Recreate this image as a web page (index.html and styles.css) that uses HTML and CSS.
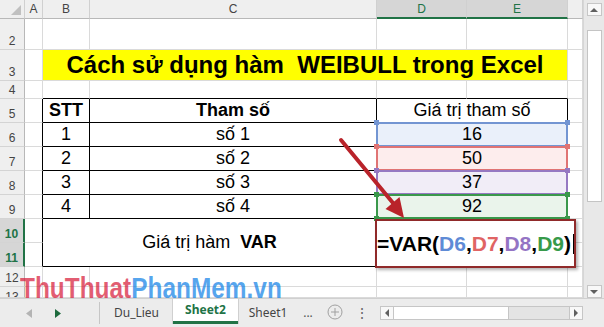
FILE: index.html
```html
<!DOCTYPE html>
<html>
<head>
<meta charset="utf-8">
<link rel="stylesheet" href="styles.css">
</head>
<body>
<div class="app">
  <div class="main">
    <div class="sheet">
      <div class="h corner"><span class="tri"></span></div>
      <div class="h">A</div><div class="h">B</div><div class="h">C</div><div class="h sel">D</div><div class="h sel">E</div><div class="h"></div>

      <div class="r">2</div><div class="c"></div><div class="c"></div><div class="c"></div><div class="c"></div><div class="c"></div><div class="c"></div>

      <div class="r">3</div><div class="c"></div><div class="c title">Cách sử dụng hàm  WEIBULL trong Excel</div><div class="c"></div>

      <div class="r">4</div><div class="c"></div><div class="c tt"></div><div class="c tt"></div><div class="c tt"></div><div class="c tt"></div><div class="c"></div>

      <div class="r">5</div><div class="c tl"></div><div class="c tb b">STT</div><div class="c tb b">Tham số</div><div class="c tb span2">Giá trị tham số</div><div class="c"></div>

      <div class="r">6</div><div class="c tl"></div><div class="c tb">1</div><div class="c tb">số 1</div><div class="c tb span2 rg rg-blue">16</div><div class="c"></div>
      <div class="r">7</div><div class="c tl"></div><div class="c tb">2</div><div class="c tb">số 2</div><div class="c tb span2 rg rg-red">50</div><div class="c"></div>
      <div class="r">8</div><div class="c tl"></div><div class="c tb">3</div><div class="c tb">số 3</div><div class="c tb span2 rg rg-purple">37</div><div class="c"></div>
      <div class="r">9</div><div class="c tl"></div><div class="c tb">4</div><div class="c tb">số 4</div><div class="c tb span2 rg rg-green">92</div><div class="c"></div>

      <div class="r sel">10</div><div class="c tl"></div><div class="c tb merge"><span>Giá trị hàm  <b>VAR</b></span></div><div class="c tb fx"><div class="editor"><span>=VAR(</span><span class="fx-b">D6</span><span>,</span><span class="fx-r">D7</span><span>,</span><span class="fx-p">D8</span><span>,</span><span class="fx-g">D9</span><span>)</span><span class="caret"></span></div></div><div class="c"></div>
      <div class="r sel">11</div><div class="c tl"></div><div class="c"></div>

      <div class="r">12</div><div class="c"></div><div class="c"></div><div class="c"></div><div class="c"></div><div class="c"></div><div class="c"></div>
      <div class="r clip">13</div><div class="c"></div><div class="c"></div><div class="c"></div><div class="c"></div><div class="c"></div><div class="c"></div>

      <svg class="arrow" width="583" height="298" viewBox="0 0 583 298">
        <line x1="341" y1="140" x2="393" y2="203" stroke="#b9232a" stroke-width="4" stroke-linecap="round"/>
        <polygon points="404,218 385.5,209 399.5,197" fill="#b9232a"/>
      </svg>
    </div>
    <div class="vscroll">
      <div class="vbtn"><span class="tri-up"></span></div>
      <div class="vthumb"></div>
      <div class="vspace"></div>
      <div class="vbtn"><span class="tri-down"></span></div>
    </div>
  </div>
  <div class="tabbar">
    <div class="nav">
      <svg width="6" height="9" viewBox="0 0 6 9"><polygon points="6,0 6,9 0,4.5" fill="#b4b4b4"/></svg>
      <svg width="6" height="9" viewBox="0 0 6 9"><polygon points="0,0 0,9 6,4.5" fill="#1e6b3e"/></svg>
    </div>
    <div class="tab du">Du_Lieu</div>
    <div class="tab s2">Sheet2</div>
    <div class="tab s1">Sheet1</div>
    <div class="tab more">...</div>
    <div class="tab add">
      <svg width="16" height="16" viewBox="0 0 16 16"><circle cx="8" cy="8" r="7" fill="none" stroke="#a0a0a0" stroke-width="1"/><line x1="8" y1="4" x2="8" y2="12" stroke="#a0a0a0"/><line x1="4" y1="8" x2="12" y2="8" stroke="#a0a0a0"/></svg>
    </div>
    <div class="tab kebab">⋮</div>
    <div class="hs">
      <div class="hbtn"><span class="tri-left"></span></div>
      <div class="hthumb"></div>
      <div class="hspace"></div>
      <div class="hbtn right"><span class="tri-right"></span></div>
    </div>
  </div>
  <div class="wm"><span class="wm-r">ThuThuat</span><span class="wm-b">PhanMem.vn</span></div>
</div>
</body>
</html>
```

FILE: styles.css
```css
* { box-sizing: border-box; margin: 0; padding: 0; }
html, body { width: 604px; height: 327px; overflow: hidden; background: #fff; }
body { font-family: "Liberation Sans", Arial, sans-serif; }

.app { width: 604px; height: 327px; display: flex; flex-direction: column; position: relative; }
.main { display: flex; height: 298px; }

.sheet {
  width: 583px;
  height: 298px;
  display: grid;
  grid-template-columns: 25px 18px 47px 287px 90px 101px 15px;
  grid-template-rows: 19px 31px 31px 18px repeat(7, 24px) 20px 11px;
  position: relative;
  overflow: hidden;
}

/* column headers */
.h {
  background: #efefef;
  border-right: 1px solid #d0d0d0;
  border-bottom: 1px solid #b8b8b8;
  font-size: 12px;
  color: #444;
  display: flex;
  align-items: center;
  justify-content: center;
}
.h.sel { background: #d6d6d6; color: #217346; border-bottom: 2px solid #217346; }
.corner { position: relative; }
.tri {
  position: absolute;
  right: 3px;
  bottom: 3px;
  width: 10px;
  height: 10px;
  background: #c0c0c0;
  clip-path: polygon(100% 0, 100% 100%, 0 100%);
}

/* row headers */
.r {
  background: #efefef;
  border-right: 1px solid #b8b8b8;
  border-bottom: 1px solid #d4d4d4;
  font-size: 12px;
  line-height: 14px;
  color: #444;
  display: flex;
  align-items: flex-end;
  justify-content: center;
  padding-bottom: 1px;
  overflow: hidden;
}
.r.sel { background: #d6d6d6; color: #217346; font-weight: bold; border-right: 2px solid #217346; }
.r.clip { align-items: flex-start; padding-top: 3px; padding-bottom: 0; }

/* cells */
.c {
  border-right: 1px solid #dadada;
  border-bottom: 1px solid #dadada;
  display: flex;
  align-items: center;
  justify-content: center;
  font-size: 18px;
  color: #000;
  white-space: pre;
}
.tt { border-bottom-color: #000; }
.tl { border-right-color: #000; }
.tb { border-right-color: #000; border-bottom-color: #000; }
.b { font-weight: bold; }
.span2 { grid-column: span 2; }

.title {
  grid-column: span 4;
  background: #ffff00;
  font-weight: bold;
  font-size: 24px;
}

.merge { grid-column: span 2; grid-row: span 2; }

/* reference range highlights */
.rg { position: relative; }
.rg::before {
  content: "";
  position: absolute;
  left: -1px; top: -1px; right: -1px; bottom: -1px;
  border: 2px solid var(--c);
}
.rg::after {
  content: "";
  position: absolute;
  left: -3px; top: -3px;
  width: 5px; height: 5px;
  background: var(--c);
  box-shadow: 191px 0 var(--c), 0 24px var(--c), 191px 24px var(--c);
}
.rg-blue { --c: #7395d2; background: #eaf0fa; }
.rg-red { --c: #e07474; background: #fdeded; }
.rg-purple { --c: #9679c2; background: #f1edf7; }
.rg-green { --c: #3a984b; background: #eaf4eb; }

/* formula editor */
.fx { grid-column: span 2; grid-row: span 2; position: relative; }
.editor {
  position: absolute;
  left: -2px;
  top: 0;
  width: 201px;
  height: 49px;
  border: 2px solid #902a2a;
  background: #fff;
  box-shadow: 2px 2px 3px rgba(0, 0, 0, 0.3);
  display: flex;
  align-items: center;
  font-weight: bold;
  font-size: 21px;
  z-index: 2;
}
.fx-b { color: #5f8bd6; }
.fx-r { color: #e06464; }
.fx-p { color: #9474c4; }
.fx-g { color: #379a4a; }
.caret { display: inline-block; width: 1px; height: 20px; background: #000; margin-left: 2px; }

.arrow { position: absolute; left: 0; top: 0; z-index: 3; pointer-events: none; }

/* vertical scrollbar */
.vscroll {
  width: 21px;
  height: 298px;
  background: #e8e8e8;
  border-left: 1px solid #d6d6d6;
  display: flex;
  flex-direction: column;
  align-items: center;
  padding-top: 3px;
}
.vbtn {
  width: 15px;
  height: 13px;
  background: #f8f8f8;
  border: 1px solid #c6c6c6;
  display: flex;
  align-items: center;
  justify-content: center;
}
.vthumb { width: 15px; height: 172px; margin-top: 14px; background: #fff; border: 1px solid #c4c4c4; }
.vspace { flex: 1; }
.tri-up { width: 0; height: 0; border-left: 4px solid transparent; border-right: 4px solid transparent; border-bottom: 4px solid #606060; }
.tri-down { width: 0; height: 0; border-left: 4px solid transparent; border-right: 4px solid transparent; border-top: 4px solid #606060; }
.tri-left { width: 0; height: 0; border-top: 4px solid transparent; border-bottom: 4px solid transparent; border-right: 4px solid #606060; }
.tri-right { width: 0; height: 0; border-top: 4px solid transparent; border-bottom: 4px solid transparent; border-left: 4px solid #606060; }

/* tab bar */
.tabbar {
  height: 29px;
  display: flex;
  align-items: stretch;
  background: #ececec;
  border-top: 1px solid #d0d0d0;
  font-family: "Noto Sans", "Open Sans", sans-serif;
  font-size: 12px;
  color: #444;
}
.nav {
  width: 100px;
  display: flex;
  align-items: center;
  padding-left: 26px;
  gap: 23px;
  margin: 3px 0 3px;
  border-right: 1px solid #c6c6c6;
}
.tab { display: flex; align-items: center; justify-content: center; padding-bottom: 2px; }
.du { width: 73px; }
.s2 {
  width: 65px;
  background: #fff;
  color: #217346;
  font-weight: bold;
  border-bottom: 3px solid #217346;
  margin-bottom: 3px;
  box-shadow: 1px 0 0 #d0d0d0, -1px 0 0 #d0d0d0;
}
.s1 { width: 60px; }
.more { width: 20px; color: #555; }
.add { width: 34px; }
.kebab { width: 20px; margin-right: 8px; color: #666; font-size: 14px; }
.hs {
  width: 203px;
  height: 14px;
  align-self: center;
  display: flex;
  border: 1px solid #c6c6c6;
  background: #e4e4e4;
}
.hbtn { width: 13px; background: #f8f8f8; border-right: 1px solid #c6c6c6; display: flex; align-items: center; justify-content: center; }
.hbtn.right { border-right: none; border-left: 1px solid #c6c6c6; }
.hthumb { width: 115px; background: #fff; border-right: 1px solid #c6c6c6; }
.hspace { flex: 1; }

/* watermark */
.wm {
  position: absolute;
  left: 20px;
  top: 273px;
  font-family: "Liberation Sans", Arial, sans-serif;
  font-weight: bold;
  font-size: 30px;
  line-height: 30px;
  white-space: nowrap;
  transform: scaleX(0.814);
  transform-origin: left top;
  z-index: 4;
  pointer-events: none;
}
.wm-r { color: rgba(215, 30, 60, 0.72); }
.wm-b { color: rgba(20, 130, 230, 0.72); }
```
